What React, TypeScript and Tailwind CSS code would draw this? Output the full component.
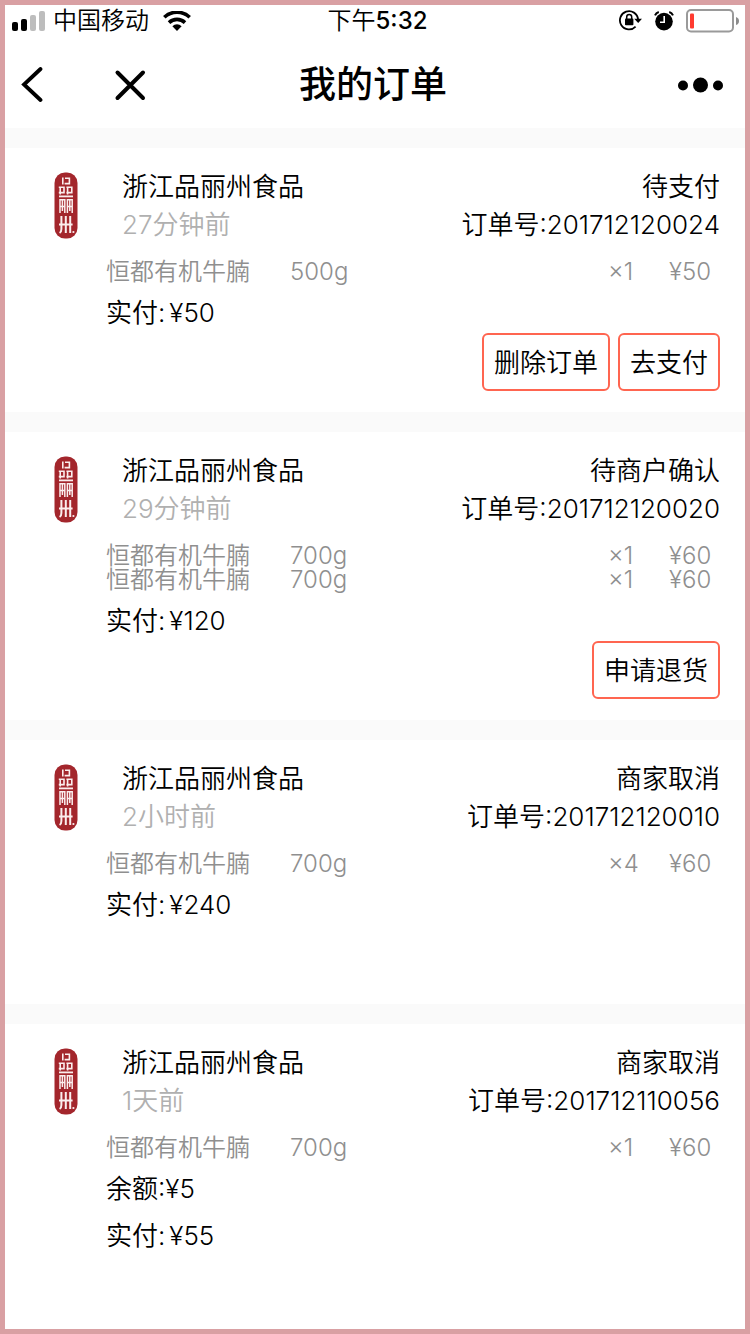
type Item = { name: string; spec: string; qty: string; price: string };
type Order = {
  no: string;
  age: string;
  status: string;
  items: Item[];
  balance?: string;
  paid: string;
  actions: string[];
};

const beef = "恒都有机牛腩";

const orders: Order[] = [
  {
    no: "201712120024",
    age: "27分钟前",
    status: "待支付",
    items: [{ name: beef, spec: "500g", qty: "×1", price: "¥50" }],
    paid: "¥50",
    actions: ["删除订单", "去支付"],
  },
  {
    no: "201712120020",
    age: "29分钟前",
    status: "待商户确认",
    items: [
      { name: beef, spec: "700g", qty: "×1", price: "¥60" },
      { name: beef, spec: "700g", qty: "×1", price: "¥60" },
    ],
    paid: "¥120",
    actions: ["申请退货"],
  },
  {
    no: "201712120010",
    age: "2小时前",
    status: "商家取消",
    items: [{ name: beef, spec: "700g", qty: "×4", price: "¥60" }],
    paid: "¥240",
    actions: [],
  },
  {
    no: "201712110056",
    age: "1天前",
    status: "商家取消",
    items: [{ name: beef, spec: "700g", qty: "×1", price: "¥60" }],
    balance: "¥5",
    paid: "¥55",
    actions: [],
  },
];

function SealLogo() {
  return (
    <svg className="h-[67px] w-6 shrink-0" viewBox="0 0 24 67" aria-hidden="true">
      <rect x="0.5" y="0.5" width="23" height="66" rx="10.5" fill="#a3262c" />
      <g fill="none" stroke="#fbeeee" strokeWidth="1.6">
        <path d="M8.8 5.5V12.5M11 6.3H15.4V11.6H10.6" />
        <path d="M4.8 15.3H10V20.6H4.8M6.2 15V22.4M12.4 15.3H17.8V20.6H12.4M13.6 15V22.4" />
        <path d="M5 24.4H19" strokeWidth="1.8" />
        <path d="M6 41V27.8H10.8V41M8.4 28V39M6 34.5H10.8M13.4 41V27.8H18.2V41M15.8 28V39M13.4 34.5H18.2" strokeWidth="1.5" />
        <path d="M7.4 44V57Q7.4 60 5.6 61M11.8 44V61M16.2 44V61M5 52.5H18.6" strokeWidth="2" />
      </g>
      <circle cx="19.4" cy="60" r="1.1" fill="#fbeeee" />
    </svg>
  );
}

function StatusBar() {
  return (
    <div className="grid h-8 grid-cols-[1fr_auto_1fr] items-center pr-1.5 pl-[7px] text-2xl leading-8">
      <div className="flex items-center">
        <svg className="h-5 w-[34px]" viewBox="0 0 34 20" aria-hidden="true">
          <rect x="0" y="11" width="6" height="9" rx="2" />
          <rect x="9" y="8" width="6" height="12" rx="2" />
          <rect x="18" y="4" width="6" height="16" rx="2" fill="#bdbdbd" />
          <rect x="27" y="0" width="6" height="20" rx="2" fill="#bdbdbd" />
        </svg>
        <span className="ml-[7px]">中国移动</span>
        <svg className="ml-3.5 h-5 w-7" viewBox="0 0 28 20" aria-hidden="true">
          <g fill="none" stroke="#000" strokeWidth="3.6">
            <path d="M1.3 6.3A18.4 18.4 0 0 1 26.7 6.3" />
            <path d="M6 11.6A11.6 11.6 0 0 1 22 11.6" />
          </g>
          <path d="M9.4 15.2A6.6 6.6 0 0 1 18.6 15.2L14 20Z" />
        </svg>
      </div>
      <div className="pl-1">
        下午<span className="font-medium">5:32</span>
      </div>
      <div className="flex items-center justify-end">
        <svg className="h-[22px] w-[23px]" viewBox="0 0 23 22" aria-hidden="true">
          <path d="M16.6 16.6A9.1 9.1 0 1 1 19.1 9.4" fill="none" stroke="#000" strokeWidth="1.8" />
          <path d="M15.2 8.8H23L19.2 13Z" />
          <rect x="6" y="8.6" width="8.4" height="6.6" rx="0.8" />
          <path d="M7.7 9.2V7A2.5 2.5 0 0 1 12.7 7V9.2" fill="none" stroke="#000" strokeWidth="1.5" />
        </svg>
        <svg className="ml-3 h-5 w-5" viewBox="0 0 20 20" aria-hidden="true">
          <circle cx="10" cy="10.6" r="8.8" />
          <path d="M10.2 5V11.2H6" fill="none" stroke="#fff" strokeWidth="1.6" />
          <path d="M1 4.4A6 6 0 0 1 4.8 1M19 4.4A6 6 0 0 0 15.2 1" fill="none" stroke="#000" strokeWidth="2" />
        </svg>
        <svg className="ml-3 h-6 w-[53px]" viewBox="0 0 53 24" aria-hidden="true">
          <rect x="1" y="1" width="46" height="21.5" rx="4" fill="none" stroke="#9a9a9a" strokeWidth="2" />
          <rect x="4" y="4.5" width="4" height="15" rx="1" fill="#ff3b30" />
          <path d="M50 8Q53 9 53 12T50 16Z" fill="#8c8c8c" />
        </svg>
      </div>
    </div>
  );
}

function NavBar() {
  return (
    <header className="grid h-[91px] grid-cols-[1fr_auto_1fr] items-center px-4 pt-1">
      <div className="flex items-center">
        <button type="button" aria-label="返回">
          <svg className="h-9 w-6" viewBox="0 0 24 36" aria-hidden="true">
            <path d="M19.5 2L3 17.5L19.5 33" fill="none" stroke="#000" strokeWidth="3.8" strokeLinecap="round" />
          </svg>
        </button>
        <button type="button" aria-label="关闭" className="ml-[69px]">
          <svg className="h-8 w-8" viewBox="0 0 32 32" aria-hidden="true">
            <path d="M3.5 3.5L29 29M29 3.5L3.5 29" fill="none" stroke="#000" strokeWidth="4" strokeLinecap="round" />
          </svg>
        </button>
      </div>
      <h1 className="pr-1 text-[37px] font-medium">我的订单</h1>
      <button type="button" aria-label="更多" className="mr-1.5 justify-self-end">
        <svg className="h-4 w-[45px]" viewBox="0 0 45 16" aria-hidden="true">
          <circle cx="5" cy="8.5" r="5" />
          <circle cx="22.5" cy="8" r="7.5" />
          <circle cx="40" cy="8.5" r="5" />
        </svg>
      </button>
    </header>
  );
}

function OrderCard({ order }: { order: Order }) {
  return (
    <article className="bg-white pt-5 pr-[25px] pb-[21px] pl-[49px] last:pb-0">
      <div className="flex items-start">
        <div className="pt-1">
          <SealLogo />
        </div>
        <div className="ml-11 flex-1 leading-[38px]">
          <h2>浙江品丽州食品</h2>
          <p className="text-[#b0b0b0]">{order.age}</p>
        </div>
        <div className="text-right leading-[38px]">
          <p>{order.status}</p>
          <p>订单号:{order.no}</p>
        </div>
      </div>
      <div className="pl-[52px]">
        <table className="mt-4 w-full table-fixed text-left text-2xl leading-6 text-[#8f8f8f]">
          <colgroup>
            <col className="w-[184px]" />
            <col />
            <col className="w-[61px]" />
            <col className="w-[51px]" />
          </colgroup>
          <tbody>
            {order.items.map((item, i) => (
              <tr key={i}>
                <td className="h-6 p-0">{item.name}</td>
                <td className="h-6 p-0">{item.spec}</td>
                <td className="h-6 p-0">{item.qty}</td>
                <td className="h-6 p-0">{item.price}</td>
              </tr>
            ))}
          </tbody>
        </table>
        <div className="flex flex-col gap-1.5 pt-2 leading-[41px]">
          {order.balance && <p>余额:{order.balance}</p>}
          <p className="flex gap-1">
            <span>实付:</span>
            <span>{order.paid}</span>
          </p>
        </div>
        <div className="flex min-h-[58px] justify-end gap-2">
          {order.actions.map((label) => (
            <button
              key={label}
              type="button"
              className="h-[58px] rounded-md border-2 border-[#ff6550] px-2.5"
            >
              {label}
            </button>
          ))}
        </div>
      </div>
    </article>
  );
}

export default function App() {
  return (
    <div className="min-h-screen border-[5px] border-[#d9a0a3] bg-white font-['Inter','Noto_Sans_CJK_SC',sans-serif] text-[26px] font-[350] text-black">
      <StatusBar />
      <NavBar />
      <main className="flex flex-col gap-5 bg-[#fafafa] pt-5">
        {orders.map((order) => (
          <OrderCard key={order.no} order={order} />
        ))}
      </main>
    </div>
  );
}
